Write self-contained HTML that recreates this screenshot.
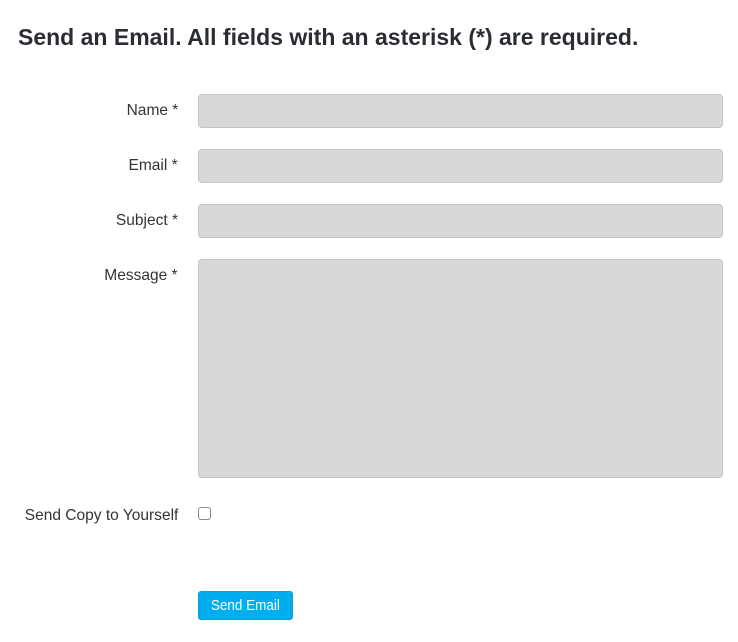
<!DOCTYPE html>
<html><head><style>
body{margin:0;background:#fff;font-family:"Liberation Sans",sans-serif;color:#333;width:738px;height:642px;position:relative;overflow:hidden}
h1{position:absolute;left:18px;top:24px;margin:0;font-size:23px;font-weight:bold;color:#2a2d33;white-space:nowrap}
.l{position:absolute;right:560px;font-size:16px;color:#333;text-align:right;white-space:nowrap;transform:scaleX(0.97);transform-origin:right center}
.f{position:absolute;left:198px;width:523px;background:#d8d8d8;border:1px solid #c4c4c4;border-radius:4px}
.cb{position:absolute;left:198px;top:507px;width:11px;height:11px;border:1px solid #888;border-radius:3px;background:#fff}
.btn{position:absolute;left:198px;top:591px;width:95px;height:29px;background:#00aef0;border:1px solid #0b9fd8;border-radius:3px;color:#fff;font-size:15px;text-align:center;line-height:28px;box-sizing:border-box}
.btn span{display:inline-block;transform:scaleX(0.9)}
</style></head><body>
<h1>Send an Email. All fields with an asterisk (*) are required.</h1>
<div class="l" style="top:102px">Name *</div><div class="f" style="top:94px;height:32px"></div>
<div class="l" style="top:157px">Email *</div><div class="f" style="top:149px;height:32px"></div>
<div class="l" style="top:212px">Subject *</div><div class="f" style="top:204px;height:32px"></div>
<div class="l" style="top:267px">Message *</div><div class="f" style="top:259px;height:217px"></div>
<div class="l" style="top:507px">Send Copy to Yourself</div><div class="cb"></div>
<div class="btn"><span>Send Email</span></div>
</body></html>
